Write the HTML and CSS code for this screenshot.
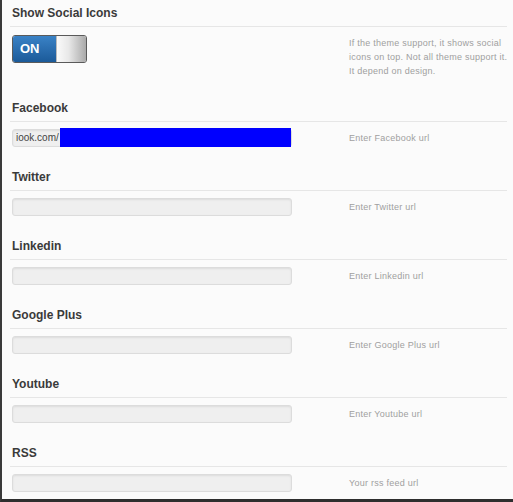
FILE: index.html
```html
<!DOCTYPE html>
<html>
<head>
<meta charset="utf-8">
<link rel="stylesheet" href="styles.css">
</head>
<body>
<div class="panel">
  <section class="field field-first">
    <h3 class="field-title">Show Social Icons</h3>
    <div class="field-body">
      <div class="control">
        <div class="toggle"><span class="toggle-on">ON</span><span class="toggle-knob"></span></div>
      </div>
      <p class="help help-multi">If the theme support, it shows social icons on top. Not all theme support it. It depend on design.</p>
    </div>
  </section>
  <section class="field">
    <h3 class="field-title">Facebook</h3>
    <div class="field-body">
      <div class="control"><div class="input input-filled"><span class="input-text">iook.com/</span><span class="redact"></span></div></div>
      <p class="help">Enter Facebook url</p>
    </div>
  </section>
  <section class="field">
    <h3 class="field-title">Twitter</h3>
    <div class="field-body">
      <div class="control"><div class="input"></div></div>
      <p class="help">Enter Twitter url</p>
    </div>
  </section>
  <section class="field">
    <h3 class="field-title">Linkedin</h3>
    <div class="field-body">
      <div class="control"><div class="input"></div></div>
      <p class="help">Enter Linkedin url</p>
    </div>
  </section>
  <section class="field">
    <h3 class="field-title">Google Plus</h3>
    <div class="field-body">
      <div class="control"><div class="input"></div></div>
      <p class="help">Enter Google Plus url</p>
    </div>
  </section>
  <section class="field">
    <h3 class="field-title">Youtube</h3>
    <div class="field-body">
      <div class="control"><div class="input"></div></div>
      <p class="help">Enter Youtube url</p>
    </div>
  </section>
  <section class="field">
    <h3 class="field-title">RSS</h3>
    <div class="field-body">
      <div class="control"><div class="input"></div></div>
      <p class="help">Your rss feed url</p>
    </div>
  </section>
</div>
</body>
</html>
```
FILE: styles.css
```css
html, body {
  margin: 0;
  padding: 0;
  background: #fbfbfb;
}
.panel {
  width: 513px;
  height: 502px;
  box-sizing: border-box;
  border-left: 2px solid #3a3a3a;
  border-bottom: 3px solid #2e2e2e;
  background: #fbfbfb;
  overflow: hidden;
  font-family: "Liberation Sans", Arial, sans-serif;
}
.field-title {
  margin: 0 6px 0 8px;
  padding-left: 2px;
  height: 26px;
  line-height: 26px;
  font-size: 12px;
  font-weight: bold;
  color: #3a3a3a;
  border-bottom: 1px solid #e6e6e6;
}
.field-body {
  display: grid;
  grid-template-columns: 337px 1fr;
  align-items: start;
  padding: 7px 0 0 10px;
  height: 35px;
}
.field-first .field-body {
  padding-top: 8px;
  height: 60px;
}
.help {
  margin: 0;
  font-size: 9px;
  line-height: 18px;
  letter-spacing: 0.25px;
  color: #a0a0a0;
}
.help-multi {
  margin-top: 1px;
  line-height: 14px;
  width: 162px;
}
.toggle {
  display: flex;
  width: 75px;
  height: 28px;
  box-sizing: border-box;
  border: 1px solid #5a5a5a;
  border-radius: 3px;
  overflow: hidden;
}
.toggle-on {
  width: 43px;
  background: linear-gradient(#3a82c6, #1b5a99);
  color: #fff;
  font-weight: bold;
  font-size: 13px;
  line-height: 26px;
  padding-left: 7px;
  box-sizing: border-box;
}
.toggle-knob {
  flex: 1;
  background: linear-gradient(90deg, #fafafa 0%, #e8e8e8 40%, #a9a9a9 100%);
  border-left: 1px solid #bbb;
}
.input {
  position: relative;
  width: 280px;
  height: 18px;
  box-sizing: border-box;
  background: #efefef;
  border: 1px solid #dcdcdc;
  border-radius: 3px;
  box-shadow: inset 0 1px 2px rgba(0, 0, 0, 0.08);
}
.input-text {
  display: block;
  padding-left: 3px;
  font-size: 10px;
  line-height: 16px;
  color: #444;
}
.redact {
  position: absolute;
  left: 47px;
  top: -2px;
  width: 231px;
  height: 19px;
  background: #0000ff;
}
```
